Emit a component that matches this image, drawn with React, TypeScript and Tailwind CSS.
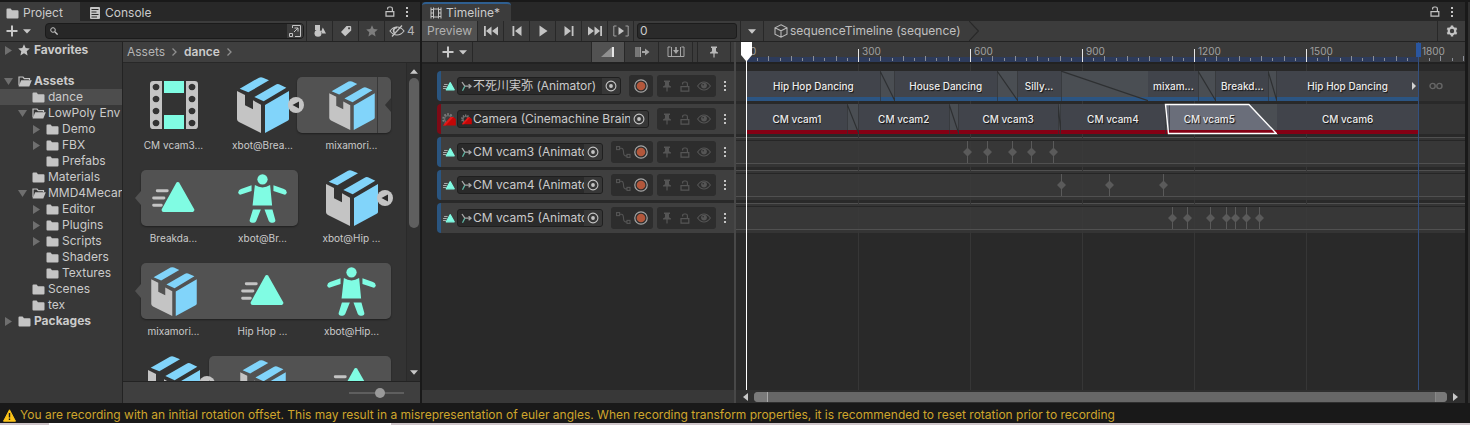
import React, { useState } from "react";

type IconProps = { className?: string };

/* ---------- icons ---------- */

const FolderIcon = ({ className = "" }: IconProps) => (
  <svg viewBox="0 0 13 11" className={"h-[11px] w-[13px] shrink-0 " + className} fill="#c4c4c4">
    <path d="M0.5 1.5Q0.5 0.5 1.5 0.5H4.6L6 2.2H11.5Q12.5 2.2 12.5 3.2V9.5Q12.5 10.5 11.5 10.5H1.5Q0.5 10.5 0.5 9.5Z" />
  </svg>
);

const FolderOpenIcon = () => (
  <svg viewBox="0 0 14 11" className="-mr-px h-[11px] w-[14px] shrink-0">
    <path d="M1 9.5V1H5L6.3 2.6H11.5V4" fill="none" stroke="#c4c4c4" strokeWidth="1.2" />
    <path d="M3.2 4.2H13.8L11.3 10.5H0.6Z" fill="#c4c4c4" />
  </svg>
);

const StarIcon = ({ className = "" }: IconProps) => (
  <svg viewBox="0 0 12 12" className={"h-3 w-3 shrink-0 " + className} fill="currentColor">
    <path d="M6 0.3 7.7 4.1 11.8 4.5 8.7 7.2 9.6 11.4 6 9.2 2.4 11.4 3.3 7.2 0.2 4.5 4.3 4.1Z" />
  </svg>
);

const LockIcon = ({ className = "" }: IconProps) => (
  <svg viewBox="0 0 10 11" className={"h-[11px] w-2.5 shrink-0 " + className} fill="none" stroke="currentColor" strokeWidth="1.2">
    <path d="M1 5.6H8.8V10.2H1Z" />
    <path d="M2.6 3.4V2.8Q2.6 1 4.4 1H5.6Q7.4 1 7.4 2.8V5.6" />
  </svg>
);

const KebabIcon = ({ className = "" }: IconProps) => (
  <svg viewBox="0 0 4 12" className={"h-3 w-1 shrink-0 " + className} fill="currentColor">
    <rect x="1" y="1" width="2" height="2" />
    <rect x="1" y="5" width="2" height="2" />
    <rect x="1" y="9" width="2" height="2" />
  </svg>
);

const PlusCaret = () => (
  <svg viewBox="0 0 26 12" className="h-3 w-[26px]" fill="#c8c8c8">
    <path d="M5 0.5H7V5H11.5V7H7V11.5H5V7H0.5V5H5Z" />
    <path d="M17 4.2H25L21 8.4Z" />
  </svg>
);

const Caret = () => (
  <svg viewBox="0 0 8 5" className="h-[5px] w-2" fill="#c8c8c8">
    <path d="M0 0.3H8L4 4.7Z" />
  </svg>
);

const PinIcon = ({ className = "" }: IconProps) => (
  <svg viewBox="0 0 10 12" className={"h-3 w-2.5 shrink-0 " + className} fill="currentColor">
    <path d="M2 0.5H8V2H7V5.2L9 6.4V7.5H5.6V11.5H4.4V7.5H1V6.4L3 5.2V2H2Z" />
  </svg>
);

const EyeIcon = ({ className = "" }: IconProps) => (
  <svg viewBox="0 0 14 10" className={"h-2.5 w-3.5 shrink-0 " + className}>
    <path d="M0.6 5Q3.4 1 7 1T13.4 5Q10.6 9 7 9T0.6 5Z" fill="none" stroke="currentColor" strokeWidth="1.1" />
    <circle cx="7" cy="4.6" r="2.9" fill="currentColor" />
    <circle cx="6.2" cy="3.8" r="0.8" fill="#2d2d2d" />
  </svg>
);

const BoxIcon = ({ className = "" }: IconProps) => (
  <svg viewBox="0 0 156 168" className={className}>
    <path d="M0 42 24 54V85L48 97V70L72 83V168L6 135Q0 132 0 127Z" fill="#c4c4c4" />
    <path d="M84 84 156 42V126Q156 129 152 131L84 168Z" fill="#81d4fa" />
    <path d="M8 35 66 2Q72-1 78 2L96 10 34 46Z" fill="#81d4fa" />
    <path d="M52 60 116 23Q121 20 126 22L148 32 80 73Z" fill="#81d4fa" />
  </svg>
);

const FilmIcon = () => (
  <svg viewBox="0 0 144 144" className="h-12 w-12">
    <path fillRule="evenodd" fill="#c4c4c4" d="M10 0H36V144H10Q0 144 0 134V10Q0 0 10 0ZM18 8a10 10 0 1 0 .1 0ZM18 44a10 10 0 1 0 .1 0ZM18 80a10 10 0 1 0 .1 0ZM18 116a10 10 0 1 0 .1 0Z" />
    <path fillRule="evenodd" fill="#c4c4c4" d="M134 0H108V144H134Q144 144 144 134V10Q144 0 134 0ZM126 8a10 10 0 1 0 .1 0ZM126 44a10 10 0 1 0 .1 0ZM126 80a10 10 0 1 0 .1 0ZM126 116a10 10 0 1 0 .1 0Z" />
    <rect x="42" y="0" width="60" height="36" fill="#80fce3" />
    <rect x="42" y="102" width="60" height="42" fill="#80fce3" />
  </svg>
);

const MotionIcon = ({ className = "" }: IconProps) => (
  <svg viewBox="0 0 130 96" className={className}>
    <path d="M16 26H46M5 48H36M5 70H28" stroke="#c4c4c4" strokeWidth="9" strokeLinecap="round" />
    <path d="M78 6 122 84H35Z" fill="#80fce3" stroke="#80fce3" strokeWidth="12" strokeLinejoin="round" />
  </svg>
);

const AvatarIcon = () => (
  <svg viewBox="0 0 146 148" className="h-[49px] w-[49px]" fill="#80fce3">
    <circle cx="73" cy="16" r="15.5" />
    <path d="M50 33Q73 48 96 33L102 95H43Z" />
    <path d="M40 34V51L8 62Q0 64 0 55Q0 48 8 45Z" />
    <path d="M106 34V51L138 62Q146 64 146 55Q146 48 138 45Z" />
    <path d="M44 107H68L54 142Q51 148 44 147Q34 148 34 140Z" />
    <path d="M79 107H103L112 140Q112 148 102 147Q95 148 92 142Z" />
  </svg>
);

const CurveIcon = () => (
  <svg viewBox="0 0 15 12" className="h-3 w-[15px]" fill="none" stroke="#555" strokeWidth="1.1">
    <rect x="0.6" y="0.6" width="3" height="3" />
    <rect x="11" y="8.4" width="3" height="3" />
    <path d="M3.6 2.2H5.5Q7.3 2.2 7.5 6T9.5 9.9H11" />
  </svg>
);

const AnimatorIcon = () => (
  <svg viewBox="0 0 11 11" className="h-[11px] w-[11px] shrink-0" fill="none" strokeWidth="1.3">
    <path d="M1 1 3.8 5.2H10M7.6 3.2 10 5.2 7.6 7.2" stroke="#a8a8a8" />
    <path d="M3.8 5.2 1.5 9.8" stroke="#5fb8a6" />
  </svg>
);

const CineIcon = ({ className = "" }: IconProps) => (
  <svg viewBox="0 0 14 13" className={className}>
    <circle cx="6" cy="6" r="4.6" fill="none" stroke="#7c7c7c" strokeWidth="2.4" strokeDasharray="1.7 1.2" />
    <circle cx="6" cy="6" r="3.4" fill="none" stroke="#6a6a6a" strokeWidth="1.4" />
    <path d="M1 12.5 8.5 4H11.5L13.8 6V12.5Z" fill="#c30606" />
    <path d="M1 12.5 8.5 4H11.5L3.5 12.5Z" fill="#e21a1a" />
  </svg>
);

const TargetIcon = () => (
  <svg viewBox="0 0 12 12" className="h-3 w-3 shrink-0">
    <circle cx="6" cy="6" r="4.9" fill="none" stroke="#c4c4c4" strokeWidth="1.1" />
    <circle cx="6" cy="6" r="1.9" fill="#c4c4c4" />
  </svg>
);

const RecordIcon = () => (
  <svg viewBox="0 0 14 14" className="h-3.5 w-3.5 shrink-0">
    <circle cx="7" cy="7" r="6.2" fill="none" stroke="#a5a5a5" strokeWidth="1.2" />
    <circle cx="7" cy="7" r="4.3" fill="#b3573b" />
  </svg>
);

const Twisty = ({ open }: { open: boolean }) => (
  <svg viewBox="0 0 9 9" className="h-[9px] w-[9px]" fill="#6f6f6f">
    {open ? <path d="M0 1H9L4.5 8Z" /> : <path d="M1 0 8 4.5 1 9Z" />}
  </svg>
);

/* ---------- project panel ---------- */

type Node = { name: string; pad: string; twisty?: "open" | "closed"; icon?: "star"; bold?: boolean; selected?: boolean; after?: boolean };

const tree: Node[] = [
  { name: "Favorites", pad: "pl-1", twisty: "closed", icon: "star", bold: true, after: true },
  { name: "Assets", pad: "pl-1", twisty: "open", bold: true },
  { name: "dance", pad: "pl-[18px]", selected: true },
  { name: "LowPoly Env", pad: "pl-[18px]", twisty: "open" },
  { name: "Demo", pad: "pl-8", twisty: "closed" },
  { name: "FBX", pad: "pl-8", twisty: "closed" },
  { name: "Prefabs", pad: "pl-8" },
  { name: "Materials", pad: "pl-[18px]" },
  { name: "MMD4Mecanim", pad: "pl-[18px]", twisty: "open" },
  { name: "Editor", pad: "pl-8", twisty: "closed" },
  { name: "Plugins", pad: "pl-8", twisty: "closed" },
  { name: "Scripts", pad: "pl-8", twisty: "closed" },
  { name: "Shaders", pad: "pl-8" },
  { name: "Textures", pad: "pl-8" },
  { name: "Scenes", pad: "pl-[18px]" },
  { name: "tex", pad: "pl-[18px]" },
  { name: "Packages", pad: "pl-1", twisty: "closed", bold: true },
];

function Tree() {
  return (
    <ul className="w-[122px] shrink-0 overflow-hidden bg-[#383838]">
      {tree.map((n) => (
        <li key={n.name} className={n.after ? "mb-[15px]" : ""}>
          <button
            type="button"
            className={`flex h-4 w-full items-center whitespace-nowrap ${n.pad} ${n.selected ? "bg-[#4d4d4d]" : ""} ${n.bold ? "font-bold" : ""}`}
          >
            <span className="w-3.5 shrink-0">{n.twisty && <Twisty open={n.twisty === "open"} />}</span>
            {n.icon === "star" ? (
              <StarIcon className="mr-px text-[#c4c4c4]" />
            ) : n.twisty === "open" ? (
              <FolderOpenIcon />
            ) : (
              <FolderIcon />
            )}
            <span className="ml-[3px]">{n.name}</span>
          </button>
        </li>
      ))}
    </ul>
  );
}

type Tile = { label?: string; kind: "film" | "box" | "boxSmall" | "motion" | "avatar"; toggle?: boolean };
type TileRow = { group: string; tail?: boolean; notch?: boolean; tiles: Tile[] };

const tileRows: TileRow[] = [
  {
    group: "left-[168px] w-[94px]",
    notch: true,
    tiles: [
      { label: "CM vcam3...", kind: "film" },
      { label: "xbot@Brea...", kind: "box", toggle: true },
      { label: "mixamori...", kind: "boxSmall" },
    ],
  },
  {
    group: "left-3 w-[157px]",
    tail: true,
    tiles: [
      { label: "Breakda...", kind: "motion" },
      { label: "xbot@Br...", kind: "avatar" },
      { label: "xbot@Hip ...", kind: "box", toggle: true },
    ],
  },
  {
    group: "left-3 w-[250px]",
    tail: true,
    tiles: [
      { label: "mixamori...", kind: "boxSmall" },
      { label: "Hip Hop ...", kind: "motion" },
      { label: "xbot@Hip...", kind: "avatar" },
    ],
  },
  {
    group: "left-20 w-[182px]",
    tiles: [{ kind: "box", toggle: true }, { kind: "boxSmall" }, { kind: "motion" }],
  },
];

function TileGlyph({ kind }: { kind: Tile["kind"] }) {
  if (kind === "film") return <FilmIcon />;
  if (kind === "box") return <BoxIcon className="h-14 w-[52px]" />;
  if (kind === "boxSmall") return <BoxIcon className="h-[49px] w-[46px]" />;
  if (kind === "motion") return <MotionIcon className="h-8 w-[43px]" />;
  return <AvatarIcon />;
}

function Tiles() {
  return (
    <div className="min-w-0 flex-1 overflow-hidden bg-[#333] pt-3.5 pl-1.5">
      {tileRows.map((row, i) => (
        <div key={i} className="relative flex h-[93px]">
          <div className={`absolute top-0 h-14 rounded-[5px] bg-[#525252] shadow-[0_1px_2px_rgba(0,0,0,0.4)] ${row.group}`}>
            {row.tail && (
              <svg viewBox="0 0 6 14" className="absolute top-[21px] -left-1.5 h-3.5 w-1.5" fill="#525252">
                <path d="M6 0V14L0 7Z" />
              </svg>
            )}
            {row.notch && (
              <>
                <span className="absolute top-0 right-[13px] h-full w-px bg-[#383838]" />
                <svg viewBox="0 0 6 14" className="absolute top-[21px] right-0 h-3.5 w-1.5" fill="#333">
                  <path d="M6 0V14L0 7Z" />
                </svg>
              </>
            )}
          </div>
          {row.tiles.map((t, j) => (
            <button key={j} type="button" className="relative flex w-[89px] flex-col items-center">
              <span className="flex h-14 items-center justify-center">
                <TileGlyph kind={t.kind} />
              </span>
              {t.label && <span className="mt-1 text-[10px] leading-4">{t.label}</span>}
              {t.toggle && (
                <svg viewBox="0 0 16 16" className="absolute top-5 right-[3px] h-4 w-4">
                  <circle cx="8" cy="8" r="8" fill="#c4c4c4" />
                  <path d="M11 4.5V11.5L4.5 8Z" fill="#2a2a2a" />
                </svg>
              )}
            </button>
          ))}
        </div>
      ))}
    </div>
  );
}

function ProjectPanel() {
  const [zoom, setZoom] = useState(58);
  return (
    <section className="flex w-[420px] shrink-0 flex-col overflow-hidden bg-[#383838]">
      <div className="flex h-[19px] shrink-0 items-center bg-[#282828] pr-[11px]">
        <button type="button" className="flex h-full w-20 items-center gap-1 bg-[#3c3c3c] pt-[3px] pl-1.5">
          <FolderIcon />
          <span>Project</span>
        </button>
        <button type="button" className="flex h-full flex-1 items-center gap-[5px] pt-[3px] pl-2.5">
          <svg viewBox="0 0 10 12" className="h-3 w-2.5">
            <rect width="10" height="12" rx="1" fill="#c4c4c4" />
            <path d="M1.5 2.5H8.5M1.5 5H6.5M1.5 7.5H8.5M1.5 10H7" stroke="#282828" />
          </svg>
          <span>Console</span>
        </button>
        <button type="button" aria-label="Lock" className="mr-2.5">
          <LockIcon className="text-[#c4c4c4]" />
        </button>
        <button type="button" aria-label="Panel menu">
          <KebabIcon className="text-[#c4c4c4]" />
        </button>
      </div>
      <div className="flex h-[21px] shrink-0 items-center border-b border-[#232323] bg-[#3c3c3c] pl-1.5">
        <button type="button" aria-label="Create" className="w-[39px]">
          <PlusCaret />
        </button>
        <div className="mr-0.5 flex h-4 flex-1 items-center overflow-hidden rounded-[4px] border border-[#1b1b1b] bg-[#272727]">
          <svg viewBox="0 0 8 8" className="ml-1 h-2 w-2 shrink-0" fill="none" stroke="#c4c4c4">
            <circle cx="3" cy="3" r="2.3" />
            <path d="M4.8 4.8 7.6 7.6" strokeWidth="1.3" />
          </svg>
          <input aria-label="Search" className="min-w-0 flex-1 bg-transparent px-1 outline-none" />
          <button type="button" aria-label="Open in search" className="flex h-full w-4 items-center justify-center bg-[#3c3c3c]">
            <svg viewBox="0 0 12 12" className="h-3 w-3" fill="none" stroke="#c4c4c4">
              <path d="M3.5 3V0.5H11.5V11.5H8.5M0.5 8.5H3.5V11.5H0.5ZM5 7 9 3M5.5 3H9V6.5M6 11.5H9" />
            </svg>
          </button>
        </div>
        <button type="button" aria-label="Search by type" className="flex h-full w-[26px] items-center justify-center border-l border-[#282828]">
          <svg viewBox="0 0 12 12" className="h-3 w-3" fill="#c4c4c4">
            <rect x="1" y="0" width="5" height="5" />
            <circle cx="4" cy="8.3" r="3.5" />
            <path d="M8.8 2.5 12 8.5H8.2L7.3 6.2Z" />
          </svg>
        </button>
        <button type="button" aria-label="Search by label" className="flex h-full w-[26px] items-center justify-center border-l border-[#282828]">
          <svg viewBox="0 0 12 12" className="h-3 w-3" fill="#c4c4c4">
            <path fillRule="evenodd" d="M6.5 1H10.5L11.2 1.7V5.5L5.2 11.3 1 7ZM9 2.3a1 1 0 1 0 .1 0Z" />
          </svg>
        </button>
        <button type="button" aria-label="Favorite" className="flex h-full w-[26px] items-center justify-center border-l border-[#282828] text-[#7d7d7d]">
          <StarIcon />
        </button>
        <button type="button" aria-label="Hidden packages" className="flex h-full w-9 items-center gap-0.5 border-l border-[#282828] pl-1 text-[#b4b4b4]">
          <svg viewBox="0 0 16 12" className="h-3 w-4" fill="none" stroke="#c4c4c4" strokeWidth="1.2">
            <path d="M1 6Q4 2 8 2T15 6Q12 10 8 10T1 6Z" />
            <path d="M5.4 8A3.2 3.2 0 0 1 8 2.6" strokeWidth="1.8" />
            <path d="M3 11.5 13 0.5" />
          </svg>
          4
        </button>
      </div>
      <div className="flex min-h-0 flex-1">
        <Tree />
        <div className="flex min-w-0 flex-1 flex-col border-l border-[#232323]">
          <div className="flex h-[21px] shrink-0 items-center gap-[7px] border-b border-[#282828] bg-[#3f3f3f] pl-1">
            <a href="#assets" className="text-[#b4b4b4]">Assets</a>
            <svg viewBox="0 0 5 8" className="h-2 w-[5px]" fill="none" stroke="#8f8f8f" strokeWidth="1.3"><path d="M0.5 0.5 4 4 0.5 7.5" /></svg>
            <a href="#dance" className="font-semibold">dance</a>
            <svg viewBox="0 0 5 8" className="h-2 w-[5px]" fill="none" stroke="#8f8f8f" strokeWidth="1.3"><path d="M0.5 0.5 4 4 0.5 7.5" /></svg>
          </div>
          <div className="flex min-h-0 flex-1">
            <Tiles />
            <div className="flex w-3.5 shrink-0 flex-col items-center border-l border-[#2a2a2a] bg-[#303030] py-1.5">
              <svg viewBox="0 0 8 5" className="h-[5px] w-2" fill="#c8c8c8"><path d="M0 4.7H8L4 0.3Z" /></svg>
              <div className="my-1 flex w-2.5 flex-1 flex-col">
                <div className="h-[52%] rounded-full bg-[#5f5f5f]" />
              </div>
              <Caret />
            </div>
          </div>
          <div className="flex h-[22px] shrink-0 items-center justify-end border-t border-[#232323] bg-[#3f3f3f] pr-4">
            <input
              type="range"
              aria-label="Icon size"
              value={zoom}
              onChange={(e) => setZoom(Number(e.target.value))}
              className="h-2.5 w-[55px] appearance-none bg-transparent [&::-webkit-slider-runnable-track]:h-0.5 [&::-webkit-slider-runnable-track]:bg-[#5e5e5e] [&::-webkit-slider-thumb]:-mt-1 [&::-webkit-slider-thumb]:h-2.5 [&::-webkit-slider-thumb]:w-2.5 [&::-webkit-slider-thumb]:appearance-none [&::-webkit-slider-thumb]:rounded-full [&::-webkit-slider-thumb]:bg-[#999]"
            />
          </div>
        </div>
      </div>
    </section>
  );
}

/* ---------- timeline ---------- */

type Clip = { span: number; label?: string; selected?: boolean; holds?: boolean };
type Track = { name: string; kind: "anim" | "cine" | "curve"; clips?: Clip[]; keys?: number[] };

const LENGTH = 672;

const tracks: Track[] = [
  {
    name: "不死川実弥 (Animator)",
    kind: "anim",
    clips: [
      { span: 133, label: "Hip Hop Dancing" },
      { span: 15 },
      { span: 102, label: "House Dancing" },
      { span: 21 },
      { span: 43, label: "Silly..." },
      { span: 88 },
      { span: 50, label: "mixam..." },
      { span: 18 },
      { span: 52, label: "Breakd..." },
      { span: 9 },
      { span: 141, label: "Hip Hop Dancing", holds: true },
    ],
  },
  {
    name: "Camera (Cinemachine Brain)",
    kind: "cine",
    clips: [
      { span: 100, label: "CM vcam1" },
      { span: 12 },
      { span: 90, label: "CM vcam2" },
      { span: 10 },
      { span: 99, label: "CM vcam3" },
      { span: 3 },
      { span: 105, label: "CM vcam4" },
      { span: 4 },
      { span: 108, label: "CM vcam5", selected: true },
      { span: 141, label: "CM vcam6" },
    ],
  },
  { name: "CM vcam3 (Animator)", kind: "curve", keys: [221, 241, 266, 285, 307] },
  { name: "CM vcam4 (Animator)", kind: "curve", keys: [315, 363, 417] },
  { name: "CM vcam5 (Animator)", kind: "curve", keys: [426, 441, 464, 480, 489, 500, 513] },
];

function TrackHeader({ track }: { track: Track }) {
  const cine = track.kind === "cine";
  return (
    <li className={`flex h-[30px] items-center rounded-l-sm border-l-4 bg-[#3f3f3f] ${cine ? "border-[#7d0a16]" : "border-[#2a5580]"}`}>
      <span className="flex w-4 shrink-0 items-center justify-center">
        {cine ? <CineIcon className="h-[13px] w-3.5" /> : <MotionIcon className="h-[11px] w-3" />}
      </span>
      <button type="button" className="mr-2 flex h-[18px] min-w-0 flex-1 items-center overflow-hidden rounded-[3px] border border-[#1f1f1f] bg-[#2a2a2a]">
        <span className="flex min-w-0 flex-1 items-center gap-px overflow-hidden pl-[3px] whitespace-nowrap">
          {cine ? <CineIcon className="h-[11px] w-[11px] shrink-0" /> : <AnimatorIcon />}
          <span>{track.name}</span>
        </span>
        <span className="flex h-full w-[18px] shrink-0 items-center justify-center bg-[#373737]">
          <TargetIcon />
        </span>
      </button>
      {!cine && (
        <span className="mr-1 flex h-[22px] shrink-0 items-center gap-[3px] rounded-[3px] bg-[#2d2d2d] px-[5px]">
          {track.kind === "curve" && (
            <button type="button" aria-label="Show curves">
              <CurveIcon />
            </button>
          )}
          <button type="button" aria-label="Record">
            <RecordIcon />
          </button>
        </span>
      )}
      <span className="flex h-[22px] w-[59px] shrink-0 items-center justify-between rounded-[3px] bg-[#2d2d2d] px-[5px] text-[#555]">
        <button type="button" aria-label="Pin"><PinIcon /></button>
        <button type="button" aria-label="Lock"><LockIcon /></button>
        <button type="button" aria-label="Mute"><EyeIcon /></button>
      </span>
      <button type="button" aria-label="Track menu" className="mx-[7px] shrink-0">
        <KebabIcon className="text-[#c4c4c4]" />
      </button>
    </li>
  );
}

function ClipView({ clip, cine }: { clip: Clip; cine: boolean }) {
  const bar = cine ? "shadow-[inset_0_-4px_0_#850014]" : "shadow-[inset_0_-4px_0_#2b5583]";
  const grow = { flexGrow: clip.span };
  if (!clip.label) {
    return (
      <div className={`min-w-0 basis-0 bg-[#4a4e53] ${bar}`} style={grow}>
        <svg viewBox="0 0 10 10" preserveAspectRatio="none" className="h-full w-full">
          <path d="M0 0 10 10M0 0V10M10 0V10" fill="none" stroke="#2e3032" strokeWidth="1.2" vectorEffect="non-scaling-stroke" />
        </svg>
      </div>
    );
  }
  if (clip.selected) {
    return (
      <div className={`relative flex min-w-0 basis-0 bg-[#4a4e53] ${bar}`} style={grow}>
        <svg viewBox="0 0 112 30" preserveAspectRatio="none" className="absolute top-0 right-0 -left-1 h-[30px] w-[calc(100%+4px)] overflow-visible">
          <path d="M0.5 0.5H84L111.5 29.5H3.5Z" fill="#6a6e7a" />
          <path d="M3.5 26H108L111.5 29.5H3.5Z" fill="#850014" />
          <path d="M4.5 1V26" stroke="#44474f" strokeWidth="1" />
          <path d="M0.5 0.5H84L111.5 29.5H3.5Z" fill="none" stroke="#fff" strokeWidth="1.4" vectorEffect="non-scaling-stroke" />
        </svg>
        <span className="relative mr-7 flex-1 self-center text-center whitespace-nowrap">{clip.label}</span>
      </div>
    );
  }
  return (
    <div className={`relative flex min-w-0 basis-0 items-center justify-center bg-[#41444b] ${bar}`} style={grow}>
      <span className="overflow-hidden whitespace-nowrap">{clip.label}</span>
      {clip.holds && (
        <svg viewBox="0 0 4 8" className="absolute top-[11px] right-0.5 h-2 w-1" fill="#d2d2d2">
          <path d="M0 0 4 4 0 8Z" />
        </svg>
      )}
    </div>
  );
}

function Lane({ track }: { track: Track }) {
  if (track.clips) {
    return (
      <div className="relative flex h-[30px] bg-white/5 pl-[11px] text-[10px] font-medium text-[#ececec] [text-shadow:1px_1px_1px_#111]">
        {track.clips.map((c, i) => (
          <ClipView key={i} clip={c} cine={track.kind === "cine"} />
        ))}
        <div className="flex w-[47px] shrink-0 items-center pl-[11px]">
          {track.kind === "anim" && (
            <svg viewBox="0 0 14 8" className="h-2 w-3.5" fill="none" stroke="#666" strokeWidth="1.4">
              <circle cx="3.6" cy="4" r="2.6" />
              <circle cx="10.4" cy="4" r="2.6" />
            </svg>
          )}
        </div>
      </div>
    );
  }
  return (
    <div className="h-[30px] border-t border-[#505050] bg-white/5 pt-0.5">
      <div className="relative h-6 border-t border-b border-t-[#262626] border-b-[#505050] bg-white/2 pr-[47px] pl-2.5">
        <div className="relative h-full">
          {(track.keys ?? []).map((k) => (
            <svg key={k} viewBox="0 0 9 22" className="absolute top-0 -ml-1 h-[22px] w-[9px]" style={{ left: `${(k / LENGTH) * 100}%` }} fill="#5a5a5a">
              <path d="M4 0H5V22H4ZM4.5 6.5 9 11 4.5 15.5 0 11Z" />
            </svg>
          ))}
        </div>
      </div>
    </div>
  );
}

const ticks = Array.from({ length: 65 }, (_, i) => i * 30);

function Ruler() {
  return (
    <div className="relative h-5 shrink-0 overflow-hidden bg-[#3a3a3a] pr-[47px] pl-2.5 text-[#a0a0a0]">
      <div className="relative h-full">
        <div className="absolute inset-x-0 bottom-0 h-[5px] bg-[#2d3b5b]" />
        {ticks.map((f) => {
          const left = { left: `${(f / 1800) * 100}%` };
          if (f % 300 === 0) {
            return (
              <React.Fragment key={f}>
                <span className="absolute bottom-0 h-[13px] w-px bg-[#e6e6e6]" style={left} />
                <span className="absolute top-[3px] ml-1 text-[10px] leading-3" style={left}>{f}</span>
              </React.Fragment>
            );
          }
          return <span key={f} className={`absolute bottom-px w-px bg-[#8b8f98] ${f % 60 === 0 ? "h-[5px]" : "h-[3px]"}`} style={left} />;
        })}
      </div>
    </div>
  );
}

function TransportButton({ label, d, stroke }: { label: string; d: string; stroke?: boolean }) {
  return (
    <button type="button" aria-label={label} className="flex h-full w-[26px] items-center justify-center border-l border-[#282828]">
      <svg viewBox="0 0 16 12" className="h-3 w-4" fill="#c4c4c4">
        <path d={d} />
        {stroke && <path d="M3.5 1H0.8V11H3.5M12.5 1H15.2V11H12.5" fill="none" stroke="#a0a0a0" />}
      </svg>
    </button>
  );
}

function TimelinePanel() {
  const [frame, setFrame] = useState("0");
  return (
    <section className="flex min-w-0 flex-1 flex-col overflow-hidden bg-[#383838]">
      <div className="flex h-[19px] shrink-0 items-center bg-[#282828] pr-[11px]">
        <button type="button" className="flex h-full w-[89px] items-center gap-1 rounded-t-sm border-t-2 border-[#2f5f90] bg-[#3c3c3c] pt-px pl-2">
          <svg viewBox="0 0 12 12" className="h-3 w-3" fill="none" stroke="#c4c4c4">
            <path d="M1 0.5V11.5M3.5 0.5V11.5M8.5 0.5V11.5M11 0.5V11.5M3.5 2H8.5M3.5 10H8.5M1 2.5H3.5M1 6H3.5M1 9.5H3.5M8.5 2.5H11M8.5 6H11M8.5 9.5H11" />
          </svg>
          <span>Timeline*</span>
        </button>
        <span className="flex-1" />
        <button type="button" aria-label="Lock" className="mr-2.5">
          <LockIcon className="text-[#c4c4c4]" />
        </button>
        <button type="button" aria-label="Panel menu">
          <KebabIcon className="text-[#c4c4c4]" />
        </button>
      </div>

      <div className="flex h-[21px] shrink-0 items-center border-b border-[#232323] bg-[#3c3c3c]">
        <button type="button" className="h-full w-[55px] bg-[#505050] text-[#b0b0b0]">Preview</button>
        <TransportButton label="Go to start" d="M1 1H2.8V11H1ZM8.5 1.5V10.5L3 6ZM15 1.5V10.5L9 6Z" />
        <TransportButton label="Previous frame" d="M3.5 1H5.3V11H3.5ZM12.5 1V11L6 6Z" />
        <TransportButton label="Play" d="M4.5 0.5V11.5L12.5 6Z" />
        <TransportButton label="Next frame" d="M12.5 1H10.7V11H12.5ZM3.5 1V11L10 6Z" />
        <TransportButton label="Go to end" d="M15 1H13.2V11H15ZM7.5 1.5V10.5L13 6ZM1 1.5V10.5L7 6Z" />
        <TransportButton label="Play range" stroke d="M5.5 2V10L11 6Z" />
        <div className="flex h-full items-center border-l border-[#282828] px-[3px]">
          <input
            aria-label="Current frame"
            value={frame}
            onChange={(e) => setFrame(e.target.value)}
            className="h-4 w-[100px] rounded-[3px] border border-[#1c1c1c] bg-[#2a2a2a] px-0.5 outline-none"
          />
        </div>
        <button type="button" aria-label="Sequence selector" className="flex h-full w-6 items-center justify-center border-x border-[#282828]">
          <Caret />
        </button>
        <a href="#sequence" className="ml-2.5 flex items-center gap-0.5 text-[#c0c0c0]">
          <svg viewBox="0 0 14 14" className="h-3.5 w-3.5" fill="none" stroke="#b8b8b8" strokeWidth="1.1">
            <path d="M7 0.8 13 3.8V10.2L7 13.2 1 10.2V3.8ZM1 3.8 7 6.8 13 3.8M7 6.8V13.2" />
          </svg>
          <span>sequenceTimeline (sequence)</span>
        </a>
        <svg viewBox="0 0 10 20" className="ml-2 h-5 w-2.5" fill="none" stroke="#282828" strokeWidth="1.2">
          <path d="M0 0 9.5 10 0 20" />
        </svg>
        <span className="flex-1" />
        <button type="button" aria-label="Timeline settings" className="flex h-full w-7 items-center justify-center border-l border-[#282828]">
          <svg viewBox="0 0 12 12" className="h-3 w-3">
            <circle cx="6" cy="6" r="3.3" fill="none" stroke="#c4c4c4" strokeWidth="2.2" />
            <g stroke="#c4c4c4" strokeWidth="2.4">
              <path d="M6 0.6V2.6M6 9.4V11.4M1.3 3.3 3 4.3M9 7.7 10.7 8.7M1.3 8.7 3 7.7M9 4.3 10.7 3.3" />
            </g>
          </svg>
        </button>
      </div>

      <div className="flex min-h-0 flex-1">
        <div className="flex w-[312px] shrink-0 flex-col bg-[#292929]">
          <div className="flex h-5 shrink-0 items-center bg-[#3c3c3c] pl-[15px]">
            <button type="button" aria-label="Add track" className="flex h-full w-9 items-center justify-center border-x border-[#282828]">
              <PlusCaret />
            </button>
            <span className="flex-1" />
            <button type="button" aria-label="Mix mode" className="flex h-full w-[34px] items-center justify-center border-x border-[#282828] bg-[#525252]">
              <svg viewBox="0 0 14 12" className="h-3 w-3.5">
                <path d="M0 11 11 1V11Z" fill="#909090" />
                <path d="M11 1H13V11H11Z" fill="#e6e6e6" />
              </svg>
            </button>
            <button type="button" aria-label="Ripple mode" className="flex h-full w-[34px] items-center justify-center border-r border-[#282828]">
              <svg viewBox="0 0 16 12" className="h-3 w-4" fill="#a6a6a6">
                <path d="M1 1H5V11H1Z" fill="#777" />
                <path d="M5.5 1H7V11H5.5ZM8 5H11V2.5L15.5 6 11 9.5V7H8Z" />
              </svg>
            </button>
            <button type="button" aria-label="Replace mode" className="flex h-full w-[34px] items-center justify-center border-r border-[#282828]">
              <svg viewBox="0 0 18 12" className="h-3 w-[18px]" fill="none" stroke="#a6a6a6">
                <path d="M3.5 1H1V10.5H17V1H14.5M4.5 1V10.5M13.5 1V10.5" />
                <path d="M8.2 1H9.8V4H12L9 8 6 4H8.2Z" fill="#a6a6a6" stroke="none" />
              </svg>
            </button>
            <button type="button" aria-label="Markers" className="mr-[3px] ml-1 flex h-full w-[34px] items-center justify-center border-x border-[#282828] text-[#b8b8b8]">
              <PinIcon />
            </button>
          </div>
          <ul className="flex min-h-0 flex-1 flex-col gap-[3px] border-t-2 border-[#222] pt-[7px] pl-[15px]">
            {tracks.map((t) => (
              <TrackHeader key={t.name} track={t} />
            ))}
          </ul>
          <div className="h-[13px] shrink-0 bg-[#383838]" />
        </div>
        <div className="w-0.5 shrink-0 bg-[#484848]" />
        <div className="flex min-w-0 flex-1 flex-col">
          <div className="relative flex min-h-0 flex-1 flex-col bg-[#292929]">
            <Ruler />
            <div className="relative flex min-h-0 flex-1 flex-col gap-[3px] border-t-2 border-[#222] pt-[7px]">
              <div className="absolute inset-y-0 right-[47px] left-2.5">
                {[1, 2, 3, 4, 5].map((n) => (
                  <span key={n} className="absolute inset-y-0 w-px bg-[#363636]" style={{ left: `${(n / 6) * 100}%` }} />
                ))}
              </div>
              {tracks.map((t) => (
                <Lane key={t.name} track={t} />
              ))}
            </div>
            <div className="absolute inset-y-0 right-[46px] w-px bg-[#33507f]">
              <span className="absolute top-px -left-0.5 h-3.5 w-[5px] bg-[#2a56a0]" />
            </div>
            <div className="absolute inset-y-0 left-2.5 w-px bg-white">
              <svg viewBox="0 0 11 19" className="absolute top-0 -left-[5px] h-[19px] w-[11px]" fill="#fff">
                <path d="M0 0H11V13L6 19H5L0 13Z" />
              </svg>
            </div>
          </div>
          <div className="flex h-[13px] shrink-0 items-center gap-1.5 bg-[#2f2f2f] px-[7px]">
            <svg viewBox="0 0 5 8" className="h-2 w-[5px]" fill="#c8c8c8"><path d="M5 0V8L0 4Z" /></svg>
            <div className="flex h-2.5 flex-1 justify-between overflow-hidden rounded-[4px] bg-[#676767]">
              <span className="w-3.5 border-r border-[#aaa] bg-[#7a7a7a]" />
              <span className="w-3 border-l border-[#888] bg-[#7a7a7a]" />
            </div>
            <svg viewBox="0 0 5 8" className="h-2 w-[5px]" fill="#c8c8c8"><path d="M0 0V8L5 4Z" /></svg>
          </div>
        </div>
      </div>
    </section>
  );
}

export default function App() {
  return (
    <div className="flex h-screen flex-col overflow-hidden bg-[#191919] pt-0.5 font-['Inter','Noto_Sans_CJK_JP',sans-serif] text-[12px] leading-4 text-[#cbcbcb]">
      <main className="flex min-h-0 flex-1 gap-0.5">
        <ProjectPanel />
        <TimelinePanel />
        <div className="ml-px w-0.5 shrink-0 bg-[#303030]" />
      </main>
      <footer className="flex h-5 shrink-0 items-center gap-1 pt-1 pl-[3px] text-[#cfa62c]">
        <svg viewBox="0 0 13 13" className="h-[13px] w-[13px] shrink-0">
          <path d="M6.5 0.8 12.5 12.2H0.5Z" fill="#fcc419" stroke="#fcc419" strokeLinejoin="round" />
          <path d="M5.8 4H7.2V8.6H5.8ZM5.8 9.6H7.2V11H5.8Z" fill="#191919" />
        </svg>
        <p className="truncate">
          You are recording with an initial rotation offset. This may result in a misrepresentation of euler angles. When recording transform properties, it is recommended to reset rotation prior to recording
        </p>
      </footer>
      <div className="flex h-0.5 shrink-0 bg-[#cfc6ca] pl-[49px]">
        <div className="w-[342px] bg-white" />
      </div>
    </div>
  );
}
